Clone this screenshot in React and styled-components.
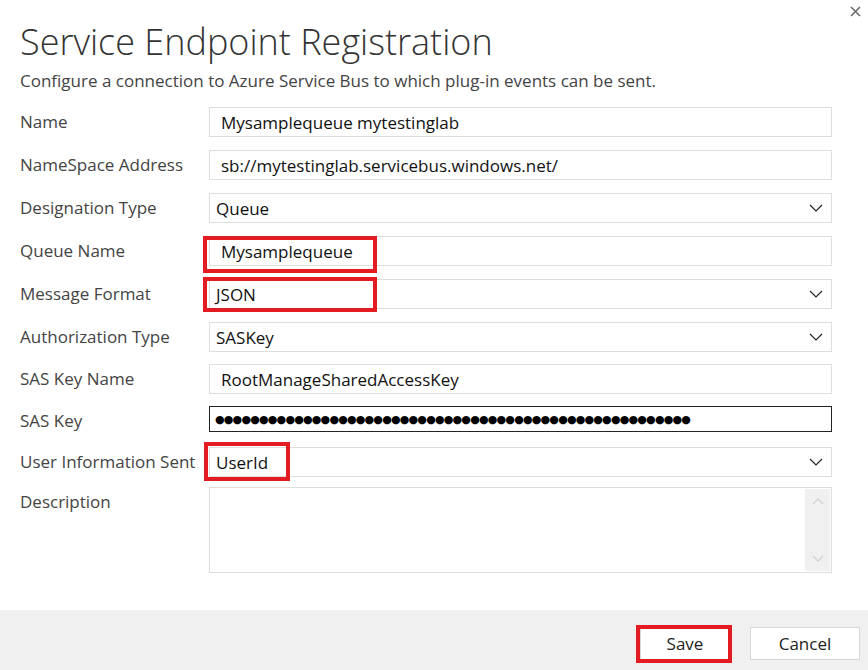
import React from "react";
import styled, { createGlobalStyle } from "styled-components";

const GlobalStyle = createGlobalStyle`
  html, body { margin: 0; padding: 0; background: #ffffff; }
  body { font-family: "Open Sans", "Noto Sans", "DejaVu Sans", sans-serif; }
  * { box-sizing: border-box; }
`;

const Dialog = styled.div`
  width: 868px;
  height: 670px;
  display: flex;
  flex-direction: column;
  background: #ffffff;
  position: relative;
  overflow: hidden;
`;

const Body = styled.div`
  flex: 1;
  padding: 20px 36px 0 20px;
`;

const CloseButton = styled.button`
  position: absolute;
  top: 2px;
  right: 4px;
  width: 18px;
  height: 18px;
  padding: 0;
  border: none;
  background: transparent;
  display: flex;
  align-items: center;
  justify-content: center;
`;

const Title = styled.h1`
  margin: 0;
  font-family: "Open Sans", "Noto Sans", sans-serif;
  font-weight: 300;
  font-size: 36px;
  line-height: 44px;
  color: #333333;
`;

const Subtitle = styled.p`
  margin: 6px 0 0 0;
  font-size: 17px;
  line-height: 22px;
  color: #444444;
`;

const Form = styled.div`
  margin-top: 2px;
  display: flex;
  flex-direction: column;
`;

const Row = styled.div`
  display: grid;
  grid-template-columns: 189px 623px;
  align-items: start;
  margin-top: ${(p) => p.$gap ?? 13}px;
`;

const Label = styled.div`
  font-size: 17px;
  line-height: ${(p) => p.$lh || 30}px;
  color: #444444;
  white-space: nowrap;
`;

const FieldWrap = styled.div`
  position: relative;
`;

const Field = styled.div`
  height: ${(p) => p.$h || 30}px;
  border: 1px solid ${(p) => (p.$dark ? "#222222" : "#dedede")};
  background: #ffffff;
  display: flex;
  align-items: center;
  padding-left: ${(p) => p.$pl || 11}px;
  padding-right: 8px;
  font-size: 17px;
  color: #111111;
  white-space: nowrap;
`;

const SelectText = styled.span`
  flex: 1;
`;

const Dots = styled.span`
  font-family: "DejaVu Sans", sans-serif;
  font-size: 11px;
  letter-spacing: -0.8px;
  color: #000000;
  line-height: 1;
`;

const TextArea = styled.div`
  height: 86px;
  border: 1px solid #dedede;
  background: #ffffff;
  display: flex;
  justify-content: flex-end;
  padding: 1px;
`;

const ScrollBar = styled.div`
  width: 25px;
  background: #f0f0f0;
  display: flex;
  flex-direction: column;
  justify-content: space-between;
`;

const ScrollButton = styled.div`
  height: 25px;
  display: flex;
  align-items: center;
  justify-content: center;
`;

const Highlight = styled.div`
  position: absolute;
  left: ${(p) => p.$l}px;
  top: ${(p) => p.$t}px;
  width: ${(p) => p.$w}px;
  height: ${(p) => p.$h}px;
  border: 4px solid #e31b23;
  pointer-events: none;
`;

const Footer = styled.div`
  height: 60px;
  background: #f0f0f0;
  display: flex;
  justify-content: flex-end;
  align-items: flex-start;
  padding: 17px 8px 0 0;
  gap: 20px;
`;

const ButtonWrap = styled.div`
  position: relative;
`;

const Button = styled.button`
  width: ${(p) => p.$w}px;
  height: 33px;
  border: 1px solid #d6d6d6;
  background: #ffffff;
  font-family: "Open Sans", "Noto Sans", sans-serif;
  font-size: 17px;
  color: #222222;
  padding: 0;
`;

const Chevron = ({ color = "#222", w = 14 }) => (
  <svg width={w} height="8" viewBox="0 0 14 8" fill="none">
    <path d="M1 1 L7 7 L13 1" stroke={color} strokeWidth="1.2" />
  </svg>
);

const ChevronUp = () => (
  <svg width="12" height="7" viewBox="0 0 12 7" fill="none">
    <path d="M1 6 L6 1 L11 6" stroke="#cfcfcf" strokeWidth="1.2" />
  </svg>
);

const ChevronDown = () => (
  <svg width="12" height="7" viewBox="0 0 12 7" fill="none">
    <path d="M1 1 L6 6 L11 1" stroke="#cfcfcf" strokeWidth="1.2" />
  </svg>
);

const Select = ({ value }) => (
  <Field $pl={6}>
    <SelectText>{value}</SelectText>
    <Chevron />
  </Field>
);

export default function App() {
  return (
    <>
      <GlobalStyle />
      <Dialog>
        <CloseButton aria-label="Close">
          <svg width="11" height="11" viewBox="0 0 11 11">
            <path d="M1 1 L10 10 M10 1 L1 10" stroke="#6b6b6b" strokeWidth="1.6" />
          </svg>
        </CloseButton>
        <Body>
          <Title>Service Endpoint Registration</Title>
          <Subtitle>
            Configure a connection to Azure Service Bus to which plug-in events can be sent.
          </Subtitle>
          <Form>
            <Row>
              <Label>Name</Label>
              <FieldWrap>
                <Field>Mysamplequeue mytestinglab</Field>
              </FieldWrap>
            </Row>

            <Row>
              <Label>NameSpace Address</Label>
              <FieldWrap>
                <Field>sb://mytestinglab.servicebus.windows.net/</Field>
              </FieldWrap>
            </Row>

            <Row>
              <Label>Designation Type</Label>
              <FieldWrap>
                <Select value="Queue" />
              </FieldWrap>
            </Row>

            <Row>
              <Label>Queue Name</Label>
              <FieldWrap>
                <Field>Mysamplequeue</Field>
                <Highlight $l={-6} $t={0} $w={174} $h={37} />
              </FieldWrap>
            </Row>

            <Row>
              <Label>Message Format</Label>
              <FieldWrap>
                <Select value="JSON" />
                <Highlight $l={-6} $t={-2} $w={174} $h={35} />
              </FieldWrap>
            </Row>

            <Row>
              <Label>Authorization Type</Label>
              <FieldWrap>
                <Select value="SASKey" />
              </FieldWrap>
            </Row>

            <Row $gap={12}>
              <Label>SAS Key Name</Label>
              <FieldWrap>
                <Field>RootManageSharedAccessKey</Field>
              </FieldWrap>
            </Row>

            <Row $gap={12}>
              <Label $lh={30}>SAS Key</Label>
              <FieldWrap>
                <Field $h={26} $dark $pl={5}>
                  <Dots>{"●".repeat(54)}</Dots>
                </Field>
              </FieldWrap>
            </Row>

            <Row $gap={11}>
              <Label>User Information Sent</Label>
              <FieldWrap>
                <Select value="UserId" />
                <Highlight $l={-5} $t={-5} $w={86} $h={39} />
              </FieldWrap>
            </Row>

            <Row $gap={10}>
              <Label>Description</Label>
              <FieldWrap>
                <TextArea>
                  <ScrollBar>
                    <ScrollButton>
                      <ChevronUp />
                    </ScrollButton>
                    <ScrollButton>
                      <ChevronDown />
                    </ScrollButton>
                  </ScrollBar>
                </TextArea>
              </FieldWrap>
            </Row>
          </Form>
        </Body>
        <Footer>
          <ButtonWrap>
            <Button $w={90}>Save</Button>
            <Highlight $l={-4} $t={-2} $w={96} $h={38} />
          </ButtonWrap>
          <Button $w={110}>Cancel</Button>
        </Footer>
      </Dialog>
    </>
  );
}
